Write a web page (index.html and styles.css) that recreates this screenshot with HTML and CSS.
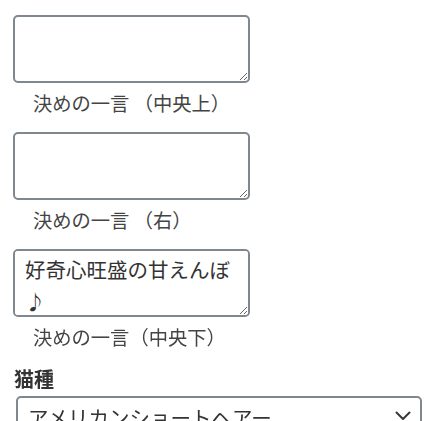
FILE: index.html
```html
<!DOCTYPE html>
<html lang="ja">
<head>
<meta charset="utf-8">
<link rel="stylesheet" href="styles.css">
</head>
<body>
<div class="page">
  <div class="memo">
    <textarea class="memo-input"></textarea>
    <div class="caption">決めの一言 （中央上）</div>
  </div>
  <div class="memo">
    <textarea class="memo-input"></textarea>
    <div class="caption">決めの一言 （右）</div>
  </div>
  <div class="memo">
    <textarea class="memo-input">好奇心旺盛の甘えんぼ♪</textarea>
    <div class="caption">決めの一言（中央下）</div>
  </div>
  <div class="group">
    <div class="group-label">猫種</div>
    <div class="select-wrap">
      <select class="select">
        <option>アメリカンショートヘアー</option>
      </select>
      <svg class="chevron" width="16" height="10" viewBox="0 0 16 10"><path d="M1.5 1.5 L8 8 L14.5 1.5" fill="none" stroke="#343a40" stroke-width="2" stroke-linecap="round" stroke-linejoin="round"/></svg>
    </div>
  </div>
</div>
</body>
</html>
```

FILE: styles.css
```css
* { box-sizing: border-box; }
html, body { margin: 0; padding: 0; background: #fff; }
body {
  font-family: "Noto Sans CJK JP", "Noto Sans", sans-serif;
  color: #333;
}
.page {
  padding: 15px 0 0 13px;
  overflow: hidden;
  height: 421px;
}
.memo {
  display: flex;
  flex-direction: column;
  align-items: flex-start;
}
.memo-input {
  width: 237px;
  height: 68px;
  border: 2px solid #7f8891;
  border-radius: 5px;
  padding: 2px 10px 0;
  margin: 0;
  font-family: "Noto Sans CJK JP", sans-serif;
  font-size: 20.5px;
  line-height: 32px;
  color: #333;
  resize: both;
  background: #fff;
  outline: none;
}
.caption {
  margin: 7px 0 16px 20px;
  font-size: 19.3px;
  line-height: 26px;
  color: #444;
  white-space: nowrap;
}
.group {
  display: flex;
  flex-direction: column;
}
.group-label {
  margin-left: 1px;
  font-size: 20px;
  line-height: 26px;
  font-weight: bold;
  color: #333;
}
.select-wrap {
  position: relative;
  margin: 4px 0 0 3px;
  width: 406px;
}
.select {
  appearance: none;
  -webkit-appearance: none;
  width: 100%;
  border: 2px solid #7f8891;
  border-radius: 5px;
  padding: 5px 40px 5px 10px;
  font-family: "Noto Sans CJK JP", sans-serif;
  font-size: 20.5px;
  line-height: 28px;
  color: #333;
  background: #fff;
}
.chevron {
  position: absolute;
  right: 11px;
  top: 15px;
}
```
